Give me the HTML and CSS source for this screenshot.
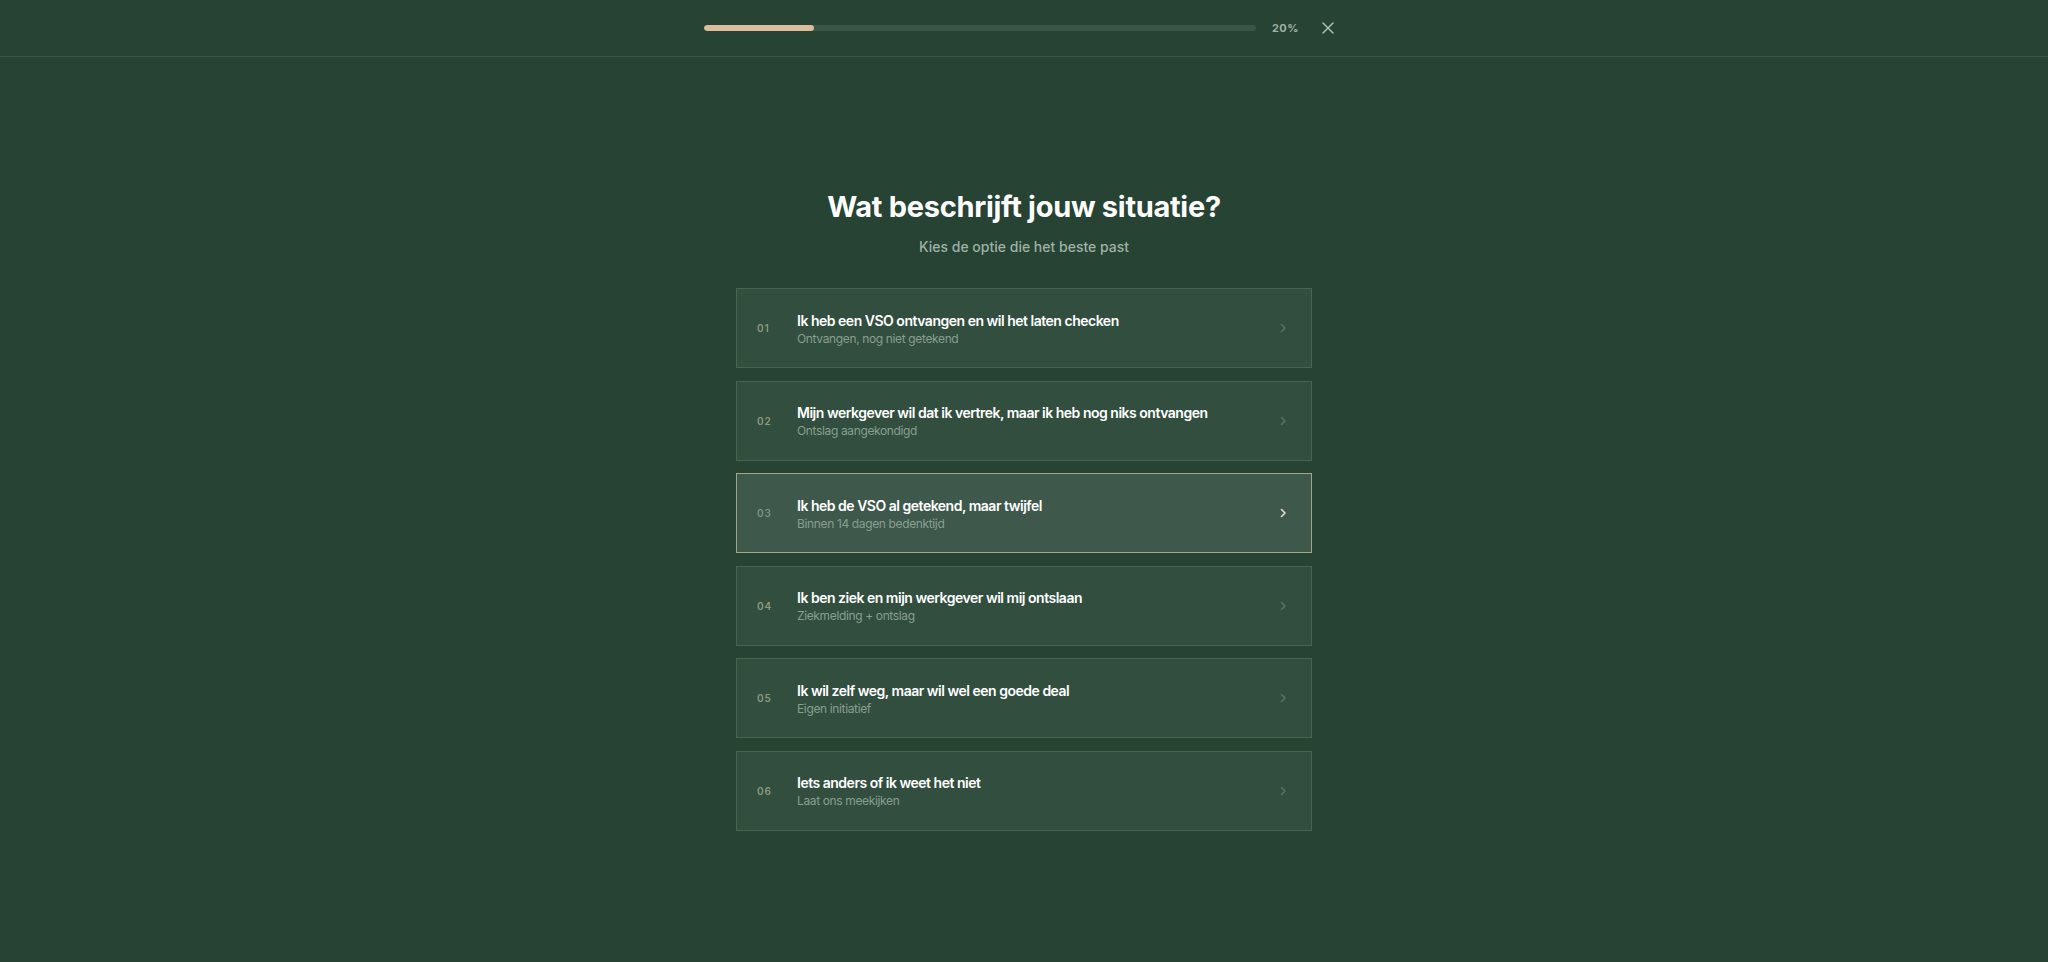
FILE: index.html
```html
<!DOCTYPE html>
<html lang="nl">
<head>
<meta charset="utf-8">
<title>Wat beschrijft jouw situatie?</title>
<link rel="stylesheet" href="styles.css">
</head>
<body>
<header class="topbar">
  <div class="topbar-inner">
    <div class="progress"><div class="progress-fill" style="width:20%"></div></div>
    <span class="progress-label">20%</span>
    <button class="close" aria-label="Sluiten">
      <svg width="14" height="14" viewBox="0 0 14 14" fill="none" stroke="currentColor" stroke-width="1.5" stroke-linecap="round"><path d="M2 2l10 10M12 2L2 12"/></svg>
    </button>
  </div>
</header>
<main class="main">
  <h1 class="title">Wat beschrijft jouw situatie?</h1>
  <p class="subtitle">Kies de optie die het beste past</p>
  <ul class="options">
    <li class="option"><span class="num">01</span><span class="text"><span class="opt-title">Ik heb een VSO ontvangen en wil het laten checken</span><span class="opt-sub">Ontvangen, nog niet getekend</span></span><svg class="chev" width="8" height="10" viewBox="0 0 8 10" fill="none" stroke="currentColor" stroke-width="1.6" stroke-linecap="round" stroke-linejoin="round"><path d="M2.5 1.5L6 5l-3.5 3.5"/></svg></li>
    <li class="option"><span class="num">02</span><span class="text"><span class="opt-title">Mijn werkgever wil dat ik vertrek, maar ik heb nog niks ontvangen</span><span class="opt-sub">Ontslag aangekondigd</span></span><svg class="chev" width="8" height="10" viewBox="0 0 8 10" fill="none" stroke="currentColor" stroke-width="1.6" stroke-linecap="round" stroke-linejoin="round"><path d="M2.5 1.5L6 5l-3.5 3.5"/></svg></li>
    <li class="option selected"><span class="num">03</span><span class="text"><span class="opt-title">Ik heb de VSO al getekend, maar twijfel</span><span class="opt-sub">Binnen 14 dagen bedenktijd</span></span><svg class="chev" width="8" height="10" viewBox="0 0 8 10" fill="none" stroke="currentColor" stroke-width="1.6" stroke-linecap="round" stroke-linejoin="round"><path d="M2.5 1.5L6 5l-3.5 3.5"/></svg></li>
    <li class="option"><span class="num">04</span><span class="text"><span class="opt-title">Ik ben ziek en mijn werkgever wil mij ontslaan</span><span class="opt-sub">Ziekmelding + ontslag</span></span><svg class="chev" width="8" height="10" viewBox="0 0 8 10" fill="none" stroke="currentColor" stroke-width="1.6" stroke-linecap="round" stroke-linejoin="round"><path d="M2.5 1.5L6 5l-3.5 3.5"/></svg></li>
    <li class="option"><span class="num">05</span><span class="text"><span class="opt-title">Ik wil zelf weg, maar wil wel een goede deal</span><span class="opt-sub">Eigen initiatief</span></span><svg class="chev" width="8" height="10" viewBox="0 0 8 10" fill="none" stroke="currentColor" stroke-width="1.6" stroke-linecap="round" stroke-linejoin="round"><path d="M2.5 1.5L6 5l-3.5 3.5"/></svg></li>
    <li class="option"><span class="num">06</span><span class="text"><span class="opt-title">Iets anders of ik weet het niet</span><span class="opt-sub">Laat ons meekijken</span></span><svg class="chev" width="8" height="10" viewBox="0 0 8 10" fill="none" stroke="currentColor" stroke-width="1.6" stroke-linecap="round" stroke-linejoin="round"><path d="M2.5 1.5L6 5l-3.5 3.5"/></svg></li>
  </ul>
</main>
</body>
</html>
```

FILE: styles.css
```css
* { box-sizing: border-box; }
html, body { margin: 0; padding: 0; }
body {
  background: #264334;
  font-family: Inter, "Noto Sans", sans-serif;
  color: #fff;
  min-height: 100vh;
}
.topbar {
  height: 57px;
  border-bottom: 1px solid #3a5746;
}
.topbar-inner {
  width: 640px;
  height: 56px;
  margin: 0 auto;
  display: flex;
  align-items: center;
  gap: 16px;
}
.progress {
  flex: 1;
  height: 6px;
  border-radius: 3px;
  background: #3a5646;
  overflow: hidden;
}
.progress-fill {
  height: 100%;
  background: #dabd9c;
  border-radius: 3px;
}
.progress-label {
  font-size: 11px;
  font-weight: 700;
  letter-spacing: 0.04em;
  color: #9fb2a5;
  width: 24px;
}
.close {
  width: 32px;
  height: 32px;
  padding: 0;
  border: 0;
  background: transparent;
  color: #aebdb2;
  display: flex;
  align-items: center;
  justify-content: center;
}
.main {
  width: 576px;
  margin: 0 auto;
  padding-top: 132px;
  display: flex;
  flex-direction: column;
  align-items: stretch;
}
.title {
  margin: 0;
  text-align: center;
  font-size: 29px;
  line-height: 36px;
  font-weight: 700;
  letter-spacing: -0.01em;
  color: #fff;
}
.subtitle {
  margin: 12px 0 0;
  text-align: center;
  font-size: 14px;
  line-height: 20px;
  font-weight: 500;
  color: #9fb2a5;
}
.options {
  list-style: none;
  margin: 31px 0 0;
  padding: 0;
  display: flex;
  flex-direction: column;
  gap: 12.5px;
}
.option {
  height: 80px;
  display: flex;
  align-items: center;
  padding: 0 24px 0 20px;
  background: #324e3f;
  border: 1px solid #48644f;
}
.option.selected {
  background: #3e584b;
  border-color: #a4a68b;
}
.num {
  width: 24px;
  margin-right: 16px;
  font-size: 10px;
  font-weight: 600;
  letter-spacing: 0.08em;
  color: #8e9a7e;
}
.option.selected .num { color: #7f9283; }
.text {
  flex: 1;
  display: flex;
  flex-direction: column;
  padding-top: 3px;
}
.opt-title {
  font-size: 14px;
  line-height: 18px;
  font-weight: 600;
  letter-spacing: -0.035em;
  color: #fff;
}
.opt-sub {
  font-size: 12px;
  line-height: 18px;
  font-weight: 400;
  letter-spacing: -0.03em;
  color: #889f90;
}
.chev {
  color: #55725f;
}
.option.selected .chev { color: #e6dccb; }
```
